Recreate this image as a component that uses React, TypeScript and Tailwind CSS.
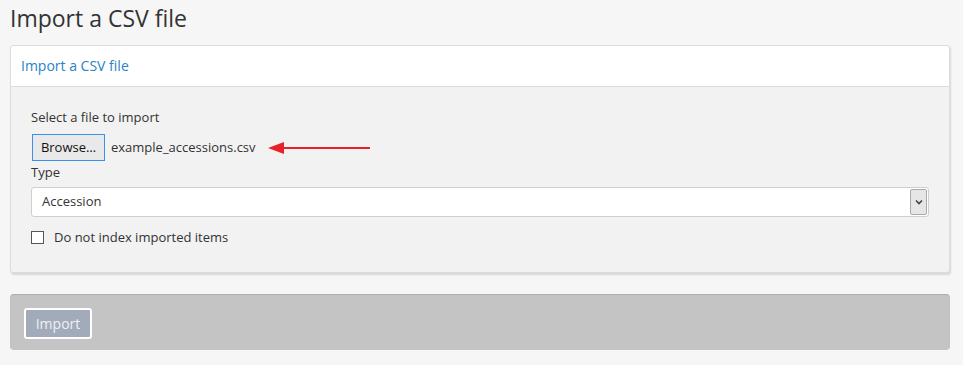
export default function App() {
  return (
    <div className="min-h-[365px] bg-[#f6f6f6] pl-[10px] pr-[13px] pt-[3px] font-['Open_Sans',sans-serif] text-[#333]">
      <h1 className="text-[23px] leading-[31px] text-[#333]">Import a CSV file</h1>

      <div className="mt-[11px] rounded-[3px] border border-[#dcdcdc] bg-[#f2f2f2] shadow-[1px_2px_2px_rgba(0,0,0,0.12)]">
        <div className="rounded-t-[3px] border-b border-[#dcdcdc] bg-white px-[10px] py-[11px]">
          <h2 className="text-[14px] leading-[18px] text-[#2a83c4]">Import a CSV file</h2>
        </div>

        <div className="px-[20px] pt-[20px] pb-[27px] text-[13px]">
          <label className="block leading-[20px]">Select a file to import</label>
          <div className="mt-[7px] flex items-center gap-[6px]">
            <button className="ml-[1px] h-[27px] w-[73px] border border-[#3b8ff0] bg-[#e9e9e9] text-[13px] text-[#111]">
              Browse…
            </button>
            <span>example_accessions.csv</span>
            <svg width="104" height="14" viewBox="0 0 104 14" className="ml-[6px]">
              <polygon points="0,7 16,1 16,13" fill="#e8202a" />
              <rect x="14" y="6" width="88" height="2" fill="#e8202a" />
            </svg>
          </div>

          <label className="mt-[1px] block leading-[20px]">Type</label>
          <div className="mt-[5px] flex h-[30px] items-center rounded-[3px] border border-[#cfcfcf] bg-white pl-[10px] pr-[1px]">
            <span className="flex-1">Accession</span>
            <span className="flex h-[26px] w-[17px] items-center justify-center rounded-[2px] border border-[#aaa] bg-[#e6e6e6]">
              <svg width="8" height="6" viewBox="0 0 8 6">
                <path d="M1 1.5 L4 4.5 L7 1.5" stroke="#444" strokeWidth="1.6" fill="none" />
              </svg>
            </span>
          </div>

          <label className="mt-[12px] flex items-center gap-[10px] leading-[16px]">
            <span className="h-[13px] w-[13px] border border-[#555] bg-white" />
            <span>Do not index imported items</span>
          </label>
        </div>
      </div>

      <div className="mt-[21px] rounded-[4px] bg-[#c4c4c4] px-[14px] pt-[14px] pb-[11px] shadow-[inset_0_1px_1px_rgba(0,0,0,0.12)]">
        <button className="block h-[31px] w-[68px] rounded-[3px] border-2 border-white bg-[#a2abba] text-[14px] text-[#eef0f4]">
          Import
        </button>
      </div>
    </div>
  );
}
